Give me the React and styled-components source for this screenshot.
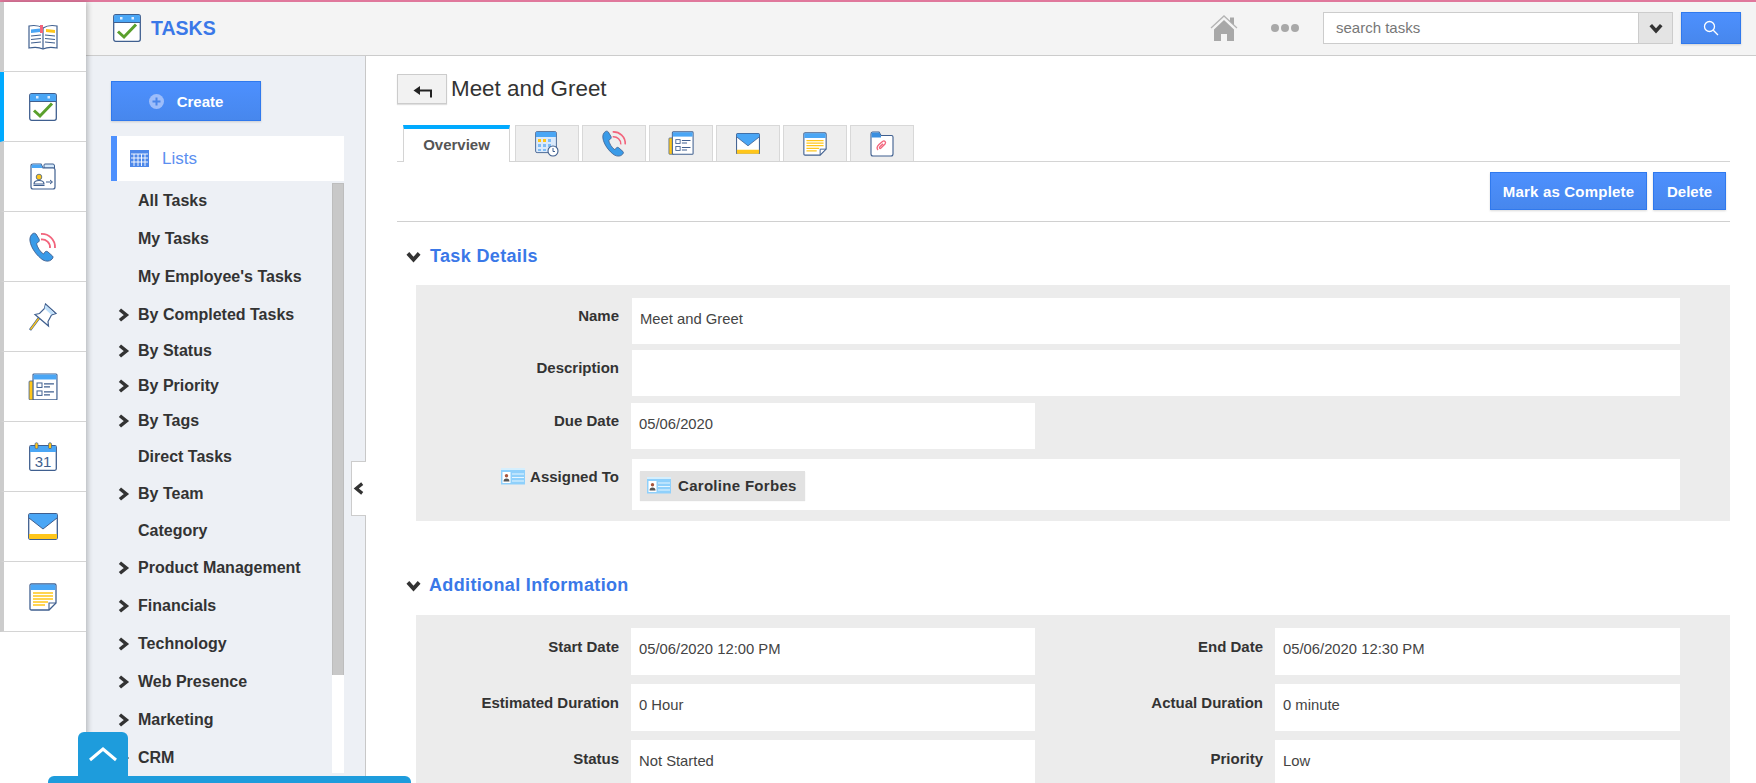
import styled, { createGlobalStyle } from "styled-components";

const Global = createGlobalStyle`
  html, body {
    margin: 0;
    height: 100%;
    overflow: hidden;
    background: #fff;
    font-family: "Liberation Sans", Arial, sans-serif;
  }
  * { box-sizing: border-box; }
`;

const NAVY = "#3f5f8f";
const BLUE = "#4aa6f5";
const YELLOW = "#ffc61a";
const PINK = "#f2647c";

const Page = styled.div`
  height: 783px;
  display: flex;
  flex-direction: column;
  overflow: hidden;
  position: relative;
`;

const TopLine = styled.div`
  height: 2px;
  flex: none;
  background: #e0789c;
`;

const Shell = styled.div`
  flex: 1;
  display: flex;
  min-height: 0;
`;

const Rail = styled.nav`
  width: 86px;
  flex: none;
  position: relative;
  z-index: 2;
  background: #fff;
  box-shadow: 2px 0 5px rgba(0, 0, 0, 0.22);
`;

const RailItem = styled.div`
  height: 70px;
  display: flex;
  align-items: center;
  justify-content: center;
  padding-right: 9px;
  padding-left: 4px;
  border-bottom: 1px solid #d4d4d4;
  border-left: 4px solid ${(p) => (p.$active ? "#00aaff" : "#cccccc")};
  background: #fff;
`;

const Column = styled.div`
  flex: 1;
  min-width: 0;
  display: flex;
  flex-direction: column;
`;

const Header = styled.header`
  height: 54px;
  flex: none;
  display: flex;
  align-items: center;
  background: #f4f4f4;
  border-bottom: 1px solid #cccccc;
  padding: 0 15px 1px 27px;
`;

const Brand = styled.div`
  display: flex;
  align-items: center;
  gap: 10px;
  font-size: 19.5px;
  font-weight: 700;
  color: #3a78e8;
  flex: 1;
`;

const HomeSlot = styled.div`
  display: flex;
  margin-right: 33px;
`;

const Dots = styled.div`
  display: flex;
  gap: 2px;
  margin-right: 24px;

  span {
    width: 8px;
    height: 8px;
    border-radius: 50%;
    background: #a8a8a8;
  }
`;

const SearchBox = styled.div`
  width: 350px;
  height: 32px;
  display: flex;
  border: 1px solid #cccccc;
  background: #fff;
  margin-right: 8px;
`;

const SearchText = styled.div`
  flex: 1;
  padding-left: 12px;
  font-size: 15px;
  line-height: 30px;
  color: #777;
`;

const SearchCaret = styled.div`
  width: 34px;
  display: flex;
  align-items: center;
  justify-content: center;
  background: #e4e4e4;
  border-left: 1px solid #cccccc;
`;

const BlueButton = styled.button`
  height: ${(p) => p.$h || 38}px;
  width: ${(p) => p.$w}px;
  padding: 0;
  display: flex;
  align-items: center;
  justify-content: center;
  gap: ${(p) => p.$gap || 0}px;
  font-family: inherit;
  font-size: 15px;
  font-weight: 700;
  letter-spacing: ${(p) => p.$ls || 0}px;
  color: #fff;
  background: linear-gradient(#4d90fe, #4787ed);
  border: 1px solid #3079ed;
  border-radius: 0;
  box-shadow: 0 1px 2px rgba(0, 0, 0, 0.15);
`;

const Body = styled.div`
  flex: 1;
  display: flex;
  min-height: 0;
`;

const Sidebar = styled.aside`
  width: 280px;
  flex: none;
  position: relative;
  background: #edf0f5;
  border-right: 1px solid #c8c8c8;
  padding: 25px 21px 0 25px;
`;

const ListsHead = styled.div`
  height: 45px;
  margin-top: 15px;
  display: flex;
  align-items: center;
  gap: 13px;
  padding-left: 13px;
  background: #fff;
  border-left: 6px solid #4d90fe;
  font-size: 17px;
  color: #5b8ff0;
`;

const ListWrap = styled.div`
  display: flex;
  margin-top: 2px;
  height: 590px;
`;

const Rows = styled.div`
  flex: 1;
  margin-top: -1px;
`;

const Row = styled.div`
  height: ${(p) => p.$h}px;
  display: flex;
  align-items: center;
  padding-left: 6px;
  font-size: 16px;
  font-weight: 700;
  color: #333;
`;

const ChevronSlot = styled.span`
  width: 21px;
  flex: none;
  display: flex;
`;

const ScrollTrack = styled.div`
  width: 12px;
  flex: none;
  background: #fff;
`;

const ScrollThumb = styled.div`
  height: 492px;
  background: #c8c8c8;
  border: 1px solid #bdbdbd;
  border-bottom: none;
`;

const Collapse = styled.div`
  position: absolute;
  right: -1px;
  top: 405px;
  width: 15px;
  height: 55px;
  display: flex;
  align-items: center;
  justify-content: flex-end;
  background: #fff;
  border: 1px solid #cccccc;
  border-right: none;
`;

const Main = styled.main`
  flex: 1;
  min-width: 0;
  padding: 18px 26px 0 31px;
`;

const TitleRow = styled.div`
  display: flex;
  align-items: center;
  gap: 4px;
  height: 30px;
`;

const BackButton = styled.button`
  width: 50px;
  height: 30px;
  display: flex;
  align-items: center;
  justify-content: center;
  background: #f2f2f2;
  border: 1px solid #cccccc;
  box-shadow: 0 1px 1px rgba(0, 0, 0, 0.12);
  padding: 4px 0 0;
`;

const Title = styled.h1`
  margin: 0;
  font-size: 22.4px;
  font-weight: 400;
  color: #333;
`;

const Tabs = styled.div`
  display: flex;
  align-items: flex-end;
  gap: 3px;
  height: 37px;
  margin-top: 21px;
  padding-left: 6px;
  border-bottom: 1px solid #d4d4d4;
`;

const ActiveTab = styled.div`
  width: 107px;
  height: 37px;
  margin-bottom: -1px;
  margin-right: 2px;
  padding-bottom: 2px;
  display: flex;
  align-items: center;
  justify-content: center;
  background: #fff;
  border: 1px solid #d4d4d4;
  border-top: 4px solid #00aaff;
  border-bottom: none;
  font-size: 15px;
  font-weight: 700;
  color: #555;
`;

const IconTab = styled.div`
  width: 64px;
  height: 36px;
  display: flex;
  align-items: center;
  justify-content: center;
  background: #eeeeee;
  border: 1px solid #d8d8d8;
  border-bottom: none;
`;

const Actions = styled.div`
  height: 60px;
  display: flex;
  justify-content: flex-end;
  gap: 6px;
  padding: 10px 4px 0 0;
  border-bottom: 1px solid #d0d0d0;
`;

const SectionHead = styled.h2`
  margin: 0;
  height: 24px;
  display: flex;
  align-items: center;
  gap: ${(p) => p.$gap}px;
  padding-left: 9px;
  font-size: 18px;
  font-weight: 700;
  letter-spacing: 0.35px;
  color: #3a78e8;
  margin-top: ${(p) => p.$top}px;
`;

const Panel = styled.section`
  margin-left: 19px;
  margin-top: ${(p) => p.$top}px;
  padding: ${(p) => p.$pad};
  background: #ececec;
`;

const PairRow = styled.div`
  display: flex;
  margin-bottom: ${(p) => p.$gap ?? 9}px;
`;

const Field = styled.div`
  display: flex;
`;

const Label = styled.label`
  width: ${(p) => p.$w}px;
  flex: none;
  display: flex;
  justify-content: flex-end;
  align-items: center;
  align-self: flex-start;
  gap: 5px;
  padding-top: ${(p) => p.$top ?? 10}px;
  font-size: 15px;
  font-weight: 700;
  color: #333;
`;

const Value = styled.div`
  width: ${(p) => p.$w}px;
  height: ${(p) => p.$h || 47}px;
  margin-left: ${(p) => p.$ml ?? 12}px;
  padding: ${(p) => p.$pad || "13px 8px 0"};
  background: #fff;
  font-size: 14.8px;
  color: #444;
`;

const Chip = styled.div`
  width: 165px;
  height: 29px;
  display: flex;
  align-items: center;
  gap: 7px;
  padding-left: 7px;
  background: #e2e2e2;
  box-shadow: 0 1px 1px rgba(0, 0, 0, 0.12);
  font-size: 15px;
  font-weight: 700;
  letter-spacing: 0.3px;
  color: #333;
`;

const DockBar = styled.div`
  position: absolute;
  z-index: 3;
  left: 48px;
  bottom: 0;
  width: 363px;
  height: 7px;
  background: #1e9cdc;
  border-radius: 6px 6px 0 0;
`;

const DockTab = styled.div`
  position: absolute;
  z-index: 3;
  left: 78px;
  bottom: 7px;
  width: 50px;
  height: 44px;
  display: flex;
  align-items: center;
  justify-content: center;
  background: #1e9cdc;
  border-radius: 6px 6px 0 0;
`;

function Chevron({ dir = "right", size = 12, color = "#333", width = 3 }) {
  const d = {
    right: "M2.5 1.500 L8 6 L2.500 10.500",
    left: "M8.500 1.500 L3 6 L8.500 10.500",
    down: "M1.500 3.500 L6 8.500 L10.500 3.500",
  }[dir];
  return (
    <svg width={size} height={size} viewBox="0 0 12 12" fill="none">
      <path d={d} stroke={color} strokeWidth={width} />
    </svg>
  );
}

function BookIcon() {
  return (
    <svg width="30" height="26" viewBox="0 0 30 26" fill="none">
      <path d="M15 4 C11 1.500 6 1 1 2 V24 C6 23 11 23 15 25 C19 23 24 23 29 24 V2 C24 1 19 1.500 15 4Z" fill="#fff" stroke={NAVY} strokeWidth="1.200" />
      <path d="M15 4 V25" stroke={NAVY} strokeWidth="1.200" />
      <path d="M3 5.500 L12 4.500 V8 L3 9Z" fill={BLUE} />
      <path d="M18 5 L27 6 V9 L18 8Z" fill={YELLOW} />
      <path d="M12 1 H15 V9 H12Z" fill={PINK} />
      <path d="M3 12 L13 11 M3 15.500 L13 14.500 M3 19 L13 18 M17 11 L27 12 M17 14.500 L27 15.500 M17 18 L27 19" stroke={NAVY} strokeWidth="1.200" />
    </svg>
  );
}

function TaskIcon() {
  return (
    <svg width="28" height="28" viewBox="0 0 28 28" fill="none">
      <rect x="0.700" y="0.700" width="26.600" height="26.600" rx="2" fill="#fff" stroke={NAVY} strokeWidth="1.300" />
      <path d="M1 2.500 Q1 1 2.500 1 H25.500 Q27 1 27 2.500 V8 H1Z" fill={BLUE} />
      <rect x="7" y="3" width="2.500" height="2.500" fill="#dfeeff" />
      <rect x="18.500" y="3" width="2.500" height="2.500" fill="#dfeeff" />
      <path d="M1 8.500 H27" stroke={NAVY} strokeWidth="1" />
      <path d="M5 17.500 L11 23 L23 10.500" stroke="#5aa02c" strokeWidth="3" />
    </svg>
  );
}

function FolderPersonIcon() {
  return (
    <svg width="26" height="27" viewBox="0 0 26 27" fill="none">
      <path d="M14 2 Q14 1 15 1 H23 Q24.500 1 24.500 3 V5 H14Z" fill="#d5e9fb" stroke={NAVY} />
      <path d="M1 3 Q1 1 3 1 H11 L13 5 H23 Q25 5 25 7 V24 Q25 26 23 26 H3 Q1 26 1 24Z" fill="#fff" stroke={NAVY} strokeWidth="1.200" />
      <path d="M1.500 3 Q1.500 1.500 3 1.500 H11 L12.500 5 H1.500Z" fill={BLUE} />
      <circle cx="9" cy="14" r="2.800" fill={YELLOW} stroke={NAVY} strokeWidth="0.800" />
      <path d="M4 21 Q4 17.500 9 17.500 Q14 17.500 14 21Z M3.500 22.500 H14.500" stroke={NAVY} strokeWidth="1.100" fill="#fff" />
      <path d="M16 19 H22 M20 17 L22.500 19 L20 21" stroke={NAVY} strokeWidth="1" />
    </svg>
  );
}

function PhoneIcon({ size = 28 }) {
  return (
    <svg width={size} height={size + 2} viewBox="0 0 28 30" fill="none">
      <path d="M4 1.500 C1.500 3 0.500 6 1 9 C2 16 8 24 14 28 C17 29.500 20 29.500 22 28 C24 26.500 24.500 25 23.500 24 L19 20 C18 19 16.500 19 15.500 20.500 L14.500 22 C11 20 8 14.500 7.500 11.500 L9.500 10 C10.500 9 10.500 8 10 7 L7 2 C6 1 5 1 4 1.500Z" fill="#3a9be8" stroke={NAVY} strokeWidth="0.900" />
      <path d="M12 2 C19.500 1.500 26.500 7.500 26 16" stroke={PINK} strokeWidth="1.800" />
      <path d="M12 7.500 C17 7 21.500 11 21 16" stroke={PINK} strokeWidth="1.800" />
    </svg>
  );
}

function PinIcon() {
  return (
    <svg width="28" height="28" viewBox="0 0 28 28" fill="none">
      <path d="M1 27 L10 15" stroke={NAVY} strokeWidth="2.600" />
      <path d="M1.500 26.500 L10 15" stroke={YELLOW} strokeWidth="1.300" />
      <path d="M16.500 1 L27 10.500 L22.500 12 L19 18.500 L19.500 23 L6 11.500 L10.500 10.500 L15.500 5.500Z" fill="#fff" stroke={NAVY} strokeWidth="1.200" />
      <path d="M16.500 2 L25.500 10.500 L22 11.500 L15.500 5.500Z" fill="#bfe0fb" />
    </svg>
  );
}

function FormIcon({ size = 30 }) {
  return (
    <svg width={size} height={size * 0.93} viewBox="0 0 30 28" fill="none">
      <rect x="1" y="8" width="6" height="19" rx="1" fill={YELLOW} stroke={NAVY} strokeWidth="0.800" />
      <rect x="5" y="1" width="24" height="26" rx="1" fill="#fff" stroke={NAVY} strokeWidth="1.200" />
      <rect x="5.500" y="1.500" width="23" height="5" fill={BLUE} />
      <rect x="9" y="10" width="5" height="4.500" fill="#fff" stroke={NAVY} />
      <rect x="9" y="18" width="5" height="4.500" fill="#fff" stroke={NAVY} />
      <path d="M16 11 H26 M16 14 H22 M16 19 H26 M16 22 H22" stroke={NAVY} strokeWidth="1.200" />
    </svg>
  );
}

function CalendarIcon() {
  return (
    <svg width="28" height="29" viewBox="0 0 28 29" fill="none">
      <rect x="0.700" y="3.700" width="26.600" height="24.600" rx="1.500" fill="#fff" stroke={NAVY} strokeWidth="1.300" />
      <rect x="1" y="4" width="26" height="6" fill={BLUE} />
      <rect x="6" y="0.700" width="3" height="6" rx="1.500" fill={YELLOW} stroke={NAVY} strokeWidth="0.700" />
      <rect x="19.500" y="0.700" width="3" height="6" rx="1.500" fill={YELLOW} stroke={NAVY} strokeWidth="0.700" />
      <text x="14" y="25" textAnchor="middle" fontSize="15" fontFamily="Liberation Sans, sans-serif" fill={NAVY}>31</text>
    </svg>
  );
}

function MailIcon({ size = 30 }) {
  return (
    <svg width={size} height={size * 0.9} viewBox="0 0 30 27" fill="none">
      <rect x="0.700" y="0.700" width="28.600" height="25.600" rx="1.500" fill="#fff" stroke={NAVY} strokeWidth="1.300" />
      <path d="M1 2 Q1 1 2 1 H28 Q29 1 29 2 V5 L15 16 L1 5Z" fill={BLUE} />
      <path d="M1 5 L15 16 L29 5" stroke={NAVY} strokeWidth="1" />
      <path d="M1 21 H29 V25 Q29 26 28 26 H2 Q1 26 1 25Z" fill={YELLOW} />
    </svg>
  );
}

function NoteIcon({ size = 28 }) {
  return (
    <svg width={size} height={size} viewBox="0 0 28 28" fill="none">
      <path d="M1 2.500 Q1 1 2.500 1 H25.500 Q27 1 27 2.500 V20 L20 27 H2.500 Q1 27 1 25.500Z" fill="#fff" stroke={NAVY} strokeWidth="1.300" />
      <path d="M1.500 2.500 Q1.500 1.500 2.500 1.500 H25.500 Q26.500 1.500 26.500 2.500 V7 H1.500Z" fill={BLUE} />
      <path d="M4 10 H24 M4 13 H24 M4 16 H24 M4 19 H19 M4 22 H16" stroke={YELLOW} strokeWidth="1.400" />
      <path d="M27 20 H20 V27" stroke={NAVY} strokeWidth="1.100" />
    </svg>
  );
}

function CalendarClockIcon() {
  return (
    <svg width="24" height="26" viewBox="0 0 24 26" fill="none">
      <rect x="0.600" y="0.600" width="20.800" height="21" rx="1.500" fill="#dbeafb" stroke={NAVY} strokeWidth="0.900" />
      <rect x="1" y="1" width="20" height="5" fill={BLUE} />
      <path d="M3 8 H6 V11 H3Z M8 8 H11 V11 H8Z" fill={YELLOW} />
      <path d="M13 8 H16 V11 H13Z M3 13 H6 V16 H3Z M8 13 H11 V16 H8Z M13 13 H16 V16 H13Z M3 18 H6 V20 H3Z M8 18 H11 V20 H8Z" fill="#7fbcf5" />
      <circle cx="18" cy="20" r="5" fill="#fff" stroke={NAVY} strokeWidth="1.100" />
      <path d="M18 17 V20.500 H20" stroke={NAVY} strokeWidth="1" />
    </svg>
  );
}

function FolderClipIcon() {
  return (
    <svg width="24" height="26" viewBox="0 0 24 26" fill="none">
      <path d="M1 3 Q1 1 2.500 1 H9 L11 4.500 H21.500 Q23 4.500 23 6 V23 Q23 25 21 25 H3 Q1 25 1 23Z" fill="#fff" stroke={NAVY} strokeWidth="1.100" />
      <path d="M1.500 2.500 Q1.500 1.500 2.500 1.500 H9 L11 5 V6.500 H1.500Z" fill="#3a8fe0" />
      <path d="M8 19 C6 17 7 15.500 9 13.500 L12.500 10.500 C14.500 9 16.500 11 15 13 L11 17 C10 18 8.800 17 9.800 15.800 L13 12.800" stroke={PINK} strokeWidth="1.300" />
    </svg>
  );
}

function ContactIcon() {
  return (
    <svg width="24" height="17" viewBox="0 0 24 17" fill="none">
      <rect x="0" y="0" width="24" height="16.500" fill="#8fd0fb" />
      <rect x="0" y="0" width="24" height="2" fill="#d6effd" />
      <rect x="1.500" y="4" width="8" height="11" fill="#fff" />
      <circle cx="5.500" cy="7.800" r="1.700" fill="#a8553c" />
      <path d="M2.500 13.500 Q2.500 10.500 5.500 10.500 Q8.500 10.500 8.500 13.500Z" fill="#555" />
      <path d="M11 6 H23 M11 9.500 H23 M11 13 H23" stroke="#e6f6ff" strokeWidth="1" />
    </svg>
  );
}

function HomeIcon() {
  return (
    <svg width="28" height="28" viewBox="0 0 28 28" fill="none">
      <path d="M1 14 L14 2 L27 14" stroke="#b4b4b4" strokeWidth="1.300" />
      <path d="M20 3.500 H24 V11 L20 7.500Z" fill="#a8a8a8" />
      <path d="M4 15.500 L14 6 L24 15.500 V27 H17 V20 H11 V27 H4Z" fill="#a8a8a8" />
    </svg>
  );
}

function SearchIcon() {
  return (
    <svg width="16" height="16" viewBox="0 0 16 16" fill="none">
      <circle cx="6.500" cy="6.500" r="5" stroke="#fff" strokeWidth="1.300" />
      <path d="M10.300 10.300 L15 15" stroke="#fff" strokeWidth="1.300" />
    </svg>
  );
}

function PlusCircle() {
  return (
    <svg width="15" height="15" viewBox="0 0 15 15">
      <circle cx="7.500" cy="7.500" r="7.500" fill="#9dbdfa" />
      <path d="M7.500 3.500 V11.500 M3.500 7.500 H11.500" stroke="#4a86ea" strokeWidth="2" />
    </svg>
  );
}

function GridIcon() {
  return (
    <svg width="19" height="17" viewBox="0 0 19 17">
      <rect width="19" height="17" fill="#4d88ea" />
      <path d="M1 4 H18 M1 8 H18 M1 12 H18 M4 4 V16 M8 4 V16 M11.500 4 V16 M15 4 V16" stroke="#fff" strokeWidth="0.900" />
    </svg>
  );
}

function BackArrow() {
  return (
    <svg width="19" height="13" viewBox="0 0 19 13" fill="none">
      <path d="M18 12.500 V5.500 H6" stroke="#222" strokeWidth="2" />
      <path d="M0.500 5.500 L7 1 V10Z" fill="#222" />
    </svg>
  );
}

const railIcons = [
  <BookIcon />,
  <TaskIcon />,
  <FolderPersonIcon />,
  <PhoneIcon />,
  <PinIcon />,
  <FormIcon />,
  <CalendarIcon />,
  <MailIcon />,
  <NoteIcon />,
];

const tabIcons = [
  <CalendarClockIcon />,
  <PhoneIcon size={25} />,
  <FormIcon size={26} />,
  <MailIcon size={24} />,
  <NoteIcon size={24} />,
  <FolderClipIcon />,
];

const listRows = [
  { t: "All Tasks", h: 38 },
  { t: "My Tasks", h: 38 },
  { t: "My Employee's Tasks", h: 38 },
  { t: "By Completed Tasks", h: 37, more: true },
  { t: "By Status", h: 36, more: true },
  { t: "By Priority", h: 34, more: true },
  { t: "By Tags", h: 36, more: true },
  { t: "Direct Tasks", h: 36 },
  { t: "By Team", h: 38, more: true },
  { t: "Category", h: 36 },
  { t: "Product Management", h: 38, more: true },
  { t: "Financials", h: 38, more: true },
  { t: "Technology", h: 38, more: true },
  { t: "Web Presence", h: 38, more: true },
  { t: "Marketing", h: 38, more: true },
  { t: "CRM", h: 38, more: true },
];

const extraFields = [
  ["Start Date", "05/06/2020 12:00 PM", "End Date", "05/06/2020 12:30 PM"],
  ["Estimated Duration", "0 Hour", "Actual Duration", "0 minute"],
  ["Status", "Not Started", "Priority", "Low"],
];

export default function App() {
  return (
    <Page>
      <Global />
      <TopLine />
      <Shell>
        <Rail>
          {railIcons.map((icon, i) => (
            <RailItem key={i} $active={i === 1}>
              {icon}
            </RailItem>
          ))}
        </Rail>
        <Column>
          <Header>
            <Brand>
              <TaskIcon />
              TASKS
            </Brand>
            <HomeSlot>
              <HomeIcon />
            </HomeSlot>
            <Dots>
              <span />
              <span />
              <span />
            </Dots>
            <SearchBox>
              <SearchText>search tasks</SearchText>
              <SearchCaret>
                <Chevron dir="down" size={14} />
              </SearchCaret>
            </SearchBox>
            <BlueButton $w={60} $h={32}>
              <SearchIcon />
            </BlueButton>
          </Header>
          <Body>
            <Sidebar>
              <BlueButton $w={150} $h={40} $gap={13}>
                <PlusCircle />
                Create
              </BlueButton>
              <ListsHead>
                <GridIcon />
                Lists
              </ListsHead>
              <ListWrap>
                <Rows>
                  {listRows.map((r) => (
                    <Row key={r.t} $h={r.h}>
                      <ChevronSlot>{r.more && <Chevron size={14} />}</ChevronSlot>
                      {r.t}
                    </Row>
                  ))}
                </Rows>
                <ScrollTrack>
                  <ScrollThumb />
                </ScrollTrack>
              </ListWrap>
              <Collapse>
                <Chevron dir="left" size={13} />
              </Collapse>
            </Sidebar>
            <Main>
              <TitleRow>
                <BackButton>
                  <BackArrow />
                </BackButton>
                <Title>Meet and Greet</Title>
              </TitleRow>
              <Tabs>
                <ActiveTab>Overview</ActiveTab>
                {tabIcons.map((icon, i) => (
                  <IconTab key={i}>{icon}</IconTab>
                ))}
              </Tabs>
              <Actions>
                <BlueButton $w={157} $ls={0.2}>Mark as Complete</BlueButton>
                <BlueButton $w={73}>Delete</BlueButton>
              </Actions>
              <SectionHead $top={22} $gap={9}>
                <Chevron dir="down" size={15} />
                Task Details
              </SectionHead>
              <Panel $top={17} $pad="13px 0 11px">
                <PairRow $gap={6}>
                  <Label $w={203} $top={9}>Name</Label>
                  <Value $w={1048} $ml={13} $h={46}>Meet and Greet</Value>
                </PairRow>
                <PairRow $gap={7}>
                  <Label $w={203} $top={9}>Description</Label>
                  <Value $w={1048} $ml={13} $h={46} />
                </PairRow>
                <PairRow $gap={10}>
                  <Label $w={203} $top={9}>Due Date</Label>
                  <Value $w={404} $h={46}>05/06/2020</Value>
                </PairRow>
                <PairRow $gap={0}>
                  <Label $w={203} $top={9}>
                    <ContactIcon />
                    Assigned To
                  </Label>
                  <Value $w={1048} $ml={13} $h={51} $pad="12px 8px 0">
                    <Chip>
                      <ContactIcon />
                      Caroline Forbes
                    </Chip>
                  </Value>
                </PairRow>
              </Panel>
              <SectionHead $top={52} $gap={8}>
                <Chevron dir="down" size={15} />
                Additional Information
              </SectionHead>
              <Panel $top={18} $pad="13px 0 0">
                {extraFields.map(([a, b, c, d]) => (
                  <PairRow key={a}>
                    <Field>
                      <Label $w={203}>{a}</Label>
                      <Value $w={404}>{b}</Value>
                    </Field>
                    <Field>
                      <Label $w={228}>{c}</Label>
                      <Value $w={405}>{d}</Value>
                    </Field>
                  </PairRow>
                ))}
              </Panel>
            </Main>
          </Body>
        </Column>
      </Shell>
      <DockTab>
        <svg width="30" height="16" viewBox="0 0 30 16" fill="none">
          <path d="M2 14 L15 3 L28 14" stroke="#fff" strokeWidth="3" />
        </svg>
      </DockTab>
      <DockBar />
    </Page>
  );
}
